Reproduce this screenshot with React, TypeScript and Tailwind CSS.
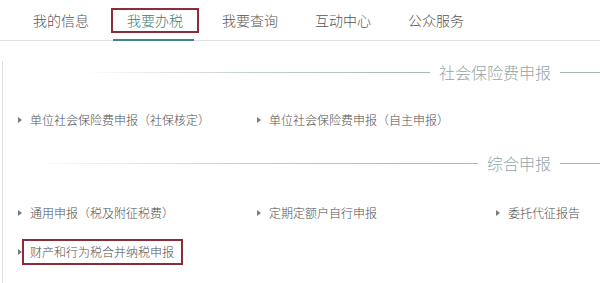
const font = { fontFamily: '"Noto Sans CJK SC", "Noto Sans", sans-serif' }

const tabs = ["我的信息", "我要办税", "我要查询", "互动中心", "公众服务"]

function Arrow() {
    return <span className="w-0 h-0 border-y-[3px] border-y-transparent border-l-[4px] border-l-[#7a7a7a] shrink-0" />
}

function Item({ label, boxed }: { label: string; boxed?: boolean }) {
    return (
        <div className="flex items-center gap-[8px] h-[20px]">
            <Arrow />
            <span className="relative text-[12px] leading-[16px] font-light text-[#505050] whitespace-nowrap">
                {label}
                {boxed && <span className="absolute -left-[8px] -right-[9px] -top-[5px] -bottom-[5px] border-2 border-[#8b2c38]" />}
            </span>
        </div>
    )
}

function SectionTitle({ title, fromPct }: { title: string; fromPct: string }) {
    return (
        <div className="flex items-center h-[22px]">
            <div className={`flex-1 h-px ${fromPct}`} />
            <span className="px-[9px] text-[16px] leading-[22px] font-light text-[#94a5a9]">{title}</span>
            <div className="w-[40px] h-px bg-[#a9b5b8]" />
        </div>
    )
}

export default function App() {
    return (
        <div className="w-[600px] h-[283px] bg-white overflow-hidden" style={font}>
            <div className="h-[41px] border-b border-[#e2e2e2] flex items-start pt-[8px] pl-[19px] gap-[9px]">
                {tabs.map((t, i) => (
                    <div
                        key={t}
                        className={`relative h-[25px] px-[14px] flex items-center text-[14px] font-light whitespace-nowrap ${i === 1 ? "border-2 border-[#8b2c38] text-[#3f7c78] -ml-px" : "text-[#555]"}`}
                    >
                        {t}
                        {i === 1 && <span className="absolute left-0 right-[3px] -bottom-[10px] h-[2px] bg-[#44867f]" />}
                    </div>
                ))}
            </div>
            <div className="ml-[2px] h-[240px] border-l border-b border-[#e0e0e0]">
                <div className="mt-[20px]">
                    <SectionTitle title="社会保险费申报" fromPct="ml-[80px] bg-gradient-to-r from-transparent via-[#c2cccf] to-[#a9b5b8]" />
                </div>
                <div className="mt-[27px] pl-[15px] grid grid-cols-[239px_239px_1fr]">
                    <Item label="单位社会保险费申报（社保核定）" />
                    <Item label="单位社会保险费申报（自主申报）" />
                </div>
                <div className="mt-[22px]">
                    <SectionTitle title="综合申报" fromPct="ml-[25px] bg-gradient-to-r from-transparent via-[#c2cccf] to-[#a9b5b8]" />
                </div>
                <div className="mt-[29px] pl-[15px] grid grid-cols-[239px_239px_1fr]">
                    <Item label="通用申报（税及附征税费）" />
                    <Item label="定期定额户自行申报" />
                    <Item label="委托代征报告" />
                </div>
                <div className="mt-[19px] pl-[15px] flex">
                    <Item label="财产和行为税合并纳税申报" boxed />
                </div>
            </div>
        </div>
    )
}
